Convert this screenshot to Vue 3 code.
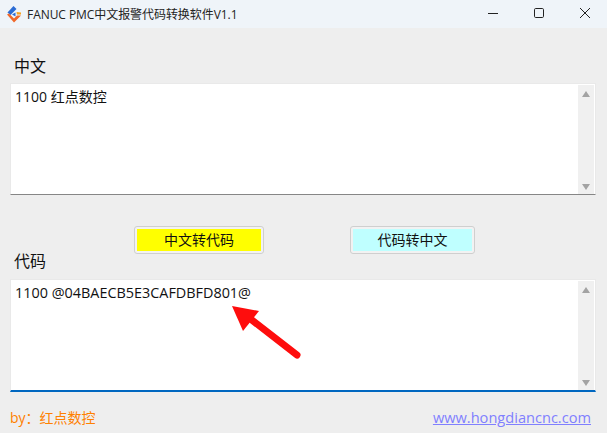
<template>
  <div class="window">
    <header class="titlebar">
      <svg class="logo" width="14" height="17" viewBox="0 0 14 17">
        <path d="M6.5 0 L9.5 3 L3.5 9 L0.5 6.5 Z" fill="#2b6cd4" />
        <path d="M0 8.5 L2 7.5 L7 12.5 L10 9.5 L14 9.5 L7 16.5 Z" fill="#f0682a" />
        <path d="M5 8.5 L8.5 6.5 L8.5 10.5 Z" fill="#2b6cd4" />
        <path d="M9.5 6 L14 6.5 L14 8.5 L10 8.5 Z" fill="#f7a21d" />
      </svg>
      <span class="title">FANUC PMC中文报警代码转换软件V1.1</span>
      <div class="controls">
        <svg width="12" height="12" viewBox="0 0 12 12"><path d="M1 6.5H11" stroke="#222" fill="none" /></svg>
        <svg width="12" height="12" viewBox="0 0 12 12"><rect x="1.5" y="1.5" width="9" height="9" rx="1.2" stroke="#222" fill="none" /></svg>
        <svg width="12" height="12" viewBox="0 0 12 12"><path d="M1 1L11 11M11 1L1 11" stroke="#222" fill="none" /></svg>
      </div>
    </header>

    <main class="content">
      <label class="label first">中文</label>
      <div class="box">
        <div class="text">{{ chinese }}</div>
        <div class="scroll">
          <span class="up"></span>
          <span class="down"></span>
        </div>
      </div>

      <div class="actions">
        <button class="btn yellow"><span>中文转代码</span></button>
        <button class="btn cyan"><span>代码转中文</span></button>
      </div>

      <label class="label second">代码</label>
      <div class="box focused">
        <div class="text">{{ code }}</div>
        <div class="scroll">
          <span class="up"></span>
          <span class="down"></span>
        </div>
        <svg class="arrow" width="80" height="70" viewBox="0 0 80 70">
          <path d="M66 50 L17 12" stroke="#fe0d0d" stroke-width="7" stroke-linecap="round" fill="none" />
          <path d="M1 1 L28 6 L12 26 Z" fill="#fe0d0d" />
        </svg>
      </div>

      <footer class="footer">
        <span class="by">by：红点数控</span>
        <a class="link">www.hongdiancnc.com</a>
      </footer>
    </main>
  </div>
</template>

<script setup>
const chinese = "1100 红点数控";
const code = "1100 @04BAECB5E3CAFDBFD801@";
</script>

<style>
body {
  margin: 0;
  background: #eeeeee;
}
</style>

<style scoped>
.window {
  width: 607px;
  height: 433px;
  overflow: hidden;
  background: #eeeeee;
  font-family: "Open Sans", "Noto Sans CJK SC", sans-serif;
  color: #111;
}

.titlebar {
  height: 28px;
  background: #eff4f9;
  display: flex;
  align-items: center;
  padding-left: 7px;
}
.logo { margin-right: 6px; }
.title {
  font-size: 12px;
  color: #222;
  letter-spacing: -0.06px;
}
.controls {
  margin-left: auto;
  display: flex;
  gap: 34px;
  padding: 0 16px 2px 0;
}

.content {
  padding: 0 11px 0 10px;
}
.label {
  display: block;
  font-size: 16px;
  line-height: 22px;
  padding-left: 4px;
}
.label.first { padding-top: 27px; margin-bottom: 6px; }
.label.second { margin-top: -4px; }

.box {
  position: relative;
  box-sizing: border-box;
  height: 112px;
  background: #fff;
  border: 1px solid #e9e9e9;
  border-bottom-color: #868686;
  display: flex;
  justify-content: space-between;
}
.box.focused {
  margin-top: 7px;
  height: 113px;
  border-bottom: 2px solid #0067c0;
}
.text {
  font-size: 14px;
  line-height: 20px;
  padding: 3px 0 0 4px;
}
.focused .text { font-size: 14.4px; }
.scroll {
  box-sizing: border-box;
  width: 16px;
  margin: 1px 1px 0 0;
  background: #f0f0f0;
  display: flex;
  flex-direction: column;
  justify-content: space-between;
  align-items: center;
  padding: 6px 0 4px;
}
.up, .down {
  width: 0;
  height: 0;
  border-left: 4.5px solid transparent;
  border-right: 4.5px solid transparent;
}
.up { border-bottom: 6px solid #a3a3a3; }
.down { border-top: 6px solid #a3a3a3; }

.arrow {
  position: absolute;
  left: 220px;
  top: 25px;
}

.actions {
  display: flex;
  padding: 31px 0 0 124px;
  gap: 86px;
  height: 28px;
}
.btn {
  width: 130px;
  height: 28px;
  padding: 2px;
  background: #f2f2f2;
  border: 1px solid #cfcfcf;
  border-radius: 3px;
  font-family: inherit;
  font-size: 14px;
  color: #111;
}
.btn span {
  display: block;
  height: 100%;
  line-height: 22px;
}
.btn.yellow span { background: #ffff00; }
.btn.cyan { width: 125px; }
.btn.cyan span { background: #bfffff; }

.footer {
  display: flex;
  justify-content: space-between;
  align-items: center;
  height: 32px;
  padding: 9px 5px 0 0;
}
.by {
  font-size: 14px;
  color: #ff8000;
}
.link {
  font-size: 14.6px;
  color: #8080ff;
  text-decoration: underline;
}
</style>
